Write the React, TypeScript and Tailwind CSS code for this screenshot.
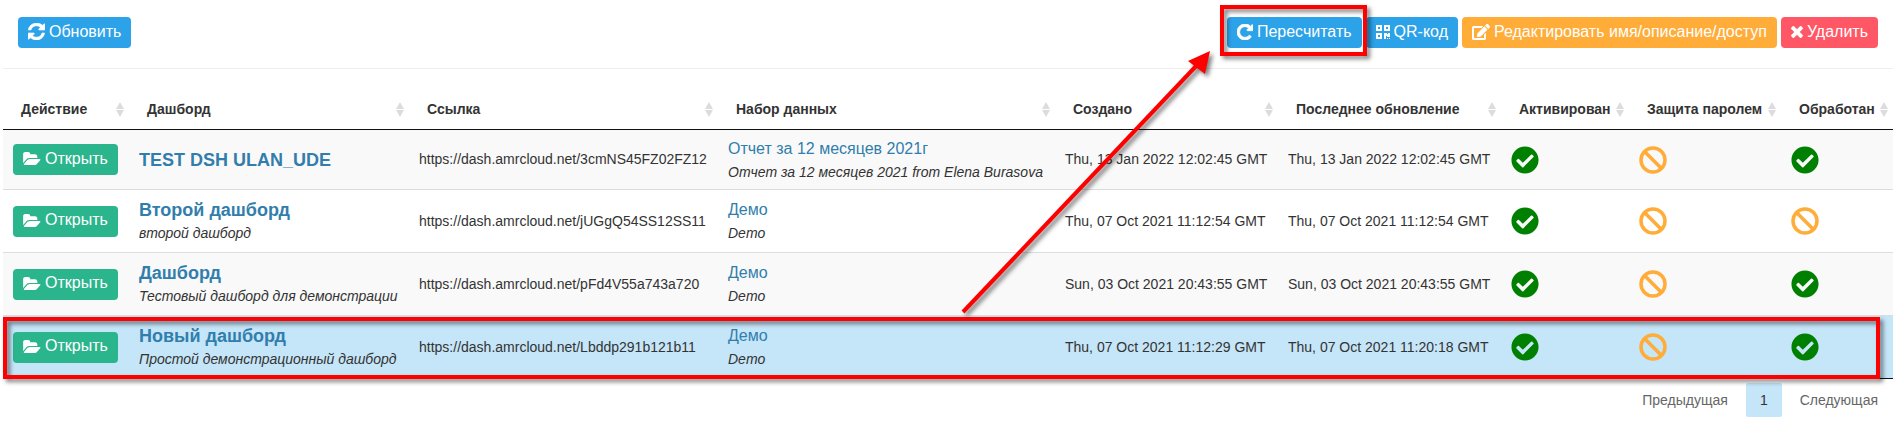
import React from "react";
import { FaEdit, FaCheckCircle } from "react-icons/fa";

type Row = {
  title: string;
  note?: string;
  url: string;
  dataset: string;
  datasetNote: string;
  created: string;
  updated: string;
  active: boolean;
  locked: boolean;
  processed: boolean;
  selected?: boolean;
};

const rows: Row[] = [
  { title: "TEST DSH ULAN_UDE", url: "https://dash.amrcloud.net/3cmNS45FZ02FZ12", dataset: "Отчет за 12 месяцев 2021г", datasetNote: "Отчет за 12 месяцев 2021 from Elena Burasova", created: "Thu, 13 Jan 2022 12:02:45 GMT", updated: "Thu, 13 Jan 2022 12:02:45 GMT", active: true, locked: false, processed: true },
  { title: "Второй дашборд", note: "второй дашборд", url: "https://dash.amrcloud.net/jUGgQ54SS12SS11", dataset: "Демо", datasetNote: "Demo", created: "Thu, 07 Oct 2021 11:12:54 GMT", updated: "Thu, 07 Oct 2021 11:12:54 GMT", active: true, locked: false, processed: false },
  { title: "Дашборд", note: "Тестовый дашборд для демонстрации", url: "https://dash.amrcloud.net/pFd4V55a743a720", dataset: "Демо", datasetNote: "Demo", created: "Sun, 03 Oct 2021 20:43:55 GMT", updated: "Sun, 03 Oct 2021 20:43:55 GMT", active: true, locked: false, processed: true },
  { title: "Новый дашборд", note: "Простой демонстрационный дашборд", url: "https://dash.amrcloud.net/Lbddp291b121b11", dataset: "Демо", datasetNote: "Demo", created: "Thu, 07 Oct 2021 11:12:29 GMT", updated: "Thu, 07 Oct 2021 11:20:18 GMT", active: true, locked: false, processed: true, selected: true },
];

const columns = [
  { label: "Действие", width: "w-[126px]" },
  { label: "Дашборд", width: "w-[280px]" },
  { label: "Ссылка", width: "w-[309px]" },
  { label: "Набор данных", width: "w-[337px]" },
  { label: "Создано", width: "w-[223px]" },
  { label: "Последнее обновление", width: "w-[223px]" },
  { label: "Активирован", width: "w-[128px]" },
  { label: "Защита паролем", width: "w-[152px]" },
  { label: "Обработан", width: "w-[112px]" },
];

const buttonBase = "inline-flex h-[31px] items-center gap-1 whitespace-nowrap rounded px-[10px] pb-[2px] text-base leading-6 text-white";

function RefreshIcon() {
  return (
    <svg viewBox="128 128 1536 1536" className="size-[17px]" fill="currentColor" stroke="currentColor" strokeWidth="50" aria-hidden="true">
      <path d="M1639 1056q0 5-1 7-64 268-268 434.500T892 1664q-146 0-282.500-55T366 1452l-129 129q-19 19-45 19t-45-19-19-45v-448q0-26 19-45t45-19h448q26 0 45 19t19 45-19 45l-137 137q71 66 161 102t187 36q134 0 250-65t186-179q11-17 53-117 8-23 30-23h192q13 0 22.500 9.500t9.500 22.500zm25-800v448q0 26-19 45t-45 19h-448q-26 0-45-19t-19-45 19-45l138-138q-148-137-349-137-134 0-250 65T460 628q-11 17-53 117-8 23-30 23H178q-13 0-22.500-9.500T146 736v-7q65-268 270-434.500T896 128q146 0 284 55.500T1425 340l130-129q19-19 45-19t45 19 19 45z" />
    </svg>
  );
}

function RotateIcon() {
  return (
    <svg viewBox="0 0 1536 1536" className="size-4" fill="currentColor" stroke="currentColor" strokeWidth="80" aria-hidden="true">
      <path d="M1536 128v448q0 26-19 45t-45 19h-448q-42 0-59-40-17-39 14-69l138-138Q969 256 768 256q-104 0-198.500 40.500T406 406 296.500 569.500 256 768t40.500 198.500T406 1130t163.500 109.500T768 1280q119 0 225-52t179-147q7-10 23-12 15 0 25 9l137 138q9 8 9.500 20.500t-7.500 22.500q-109 132-264 204.500T768 1536q-156 0-298-61t-245-164-164-245T0 768t61-298 164-245T470 61 768 0q147 0 284.500 55.500T1297 212l130-129q29-31 70-14 39 17 39 59z" />
    </svg>
  );
}

function QrIcon() {
  return (
    <svg viewBox="0 0 14 14" className="size-[14px]" fill="currentColor" aria-hidden="true">
      <path fillRule="evenodd" d="M0 0h6v6H0zM2 2v2h2V2zM8 0h6v6H8zM10 2v2h2V2zM0 8h6v6H0zM2 10v2h2v-2zM8 8h3v1h1V8h2v4h-3v-1h-1v3H8zM11 13h1v1h-1zM13 13h1v1h-1z" />
    </svg>
  );
}

function FolderIcon() {
  return (
    <svg viewBox="-64 128 1920 1408" className="h-[13px] w-[18px]" fill="currentColor" aria-hidden="true">
      <path d="M1815 952q0 31-31 66l-336 396q-43 51-120.500 86.500T1184 1536H96q-34 0-60.500-13T9 1480q0-31 31-66l336-396q43-51 120.500-86.500T640 896h1088q34 0 60.500 13t26.500 43zm-343-344v160H640q-94 0-197 47.500T279 935l-337 396-5 6q0-4-.5-12.500T-64 1312V352q0-92 66-158t158-66h320q92 0 158 66t66 158v32h544q92 0 158 66t66 158z" />
    </svg>
  );
}

function CrossIcon() {
  return (
    <svg viewBox="302 366 1188 1188" className="size-3" fill="currentColor" aria-hidden="true">
      <path d="M1490 1322q0 40-28 68l-136 136q-28 28-68 28t-68-28l-294-294-294 294q-28 28-68 28t-68-28l-136-136q-28-28-28-68t28-68l294-294-294-294q-28-28-28-68t28-68l136-136q28-28 68-28t68 28l294 294 294-294q28-28 68-28t68 28l136 136q28 28 28 68t-28 68l-294 294 294 294q28 28 28 68z" />
    </svg>
  );
}

function SortIcon() {
  return (
    <svg viewBox="0 0 8 15" className="h-[15px] w-2 shrink-0" fill="#dcdcdc" aria-hidden="true">
      <path d="M4 0L8 7H0zM0 8h8l-4 7z" />
    </svg>
  );
}

function Status({ on }: { on: boolean }) {
  return on ? (
    <FaCheckCircle className="size-7 text-[#008000]" role="img" aria-label="Да" />
  ) : (
    <svg viewBox="0 0 28 28" className="size-7" fill="none" stroke="#ffac38" strokeWidth="3.500" role="img" aria-label="Нет">
      <circle cx="14" cy="14" r="12" />
      <path d="M5.500 5.500l17 17" />
    </svg>
  );
}

export default function App() {
  return (
    <main className="relative bg-white pl-[3px] pr-[11px] font-['Liberation_Sans',Arial,sans-serif] text-sm leading-[21px] text-[#333]">
      <header className="flex h-[69px] items-start justify-between border-b border-[#eee] pl-[15px] pr-[15px] pt-[17px]">
        <button className={`${buttonBase} bg-[#2ca2e8]`}>
          <RefreshIcon /> Обновить
        </button>
        <div className="flex gap-1">
          <div className="relative flex">
            <button className={`${buttonBase} bg-[#2ca2e8]`}>
              <RotateIcon /> Пересчитать
            </button>
            <div className="pointer-events-none absolute -bottom-2 -left-[7px] -right-[5px] -top-3 z-10 border-4 border-[#f00] drop-shadow-[3px_3px_2px_rgba(0,0,0,0.5)]" />
          </div>
          <button className={`${buttonBase} bg-[#2ca2e8]`}>
            <QrIcon /> QR-код
          </button>
          <button className={`${buttonBase} bg-[#ffac38]`}>
            <FaEdit className="h-4 w-[18px]" aria-hidden="true" /> Редактировать имя/описание/доступ
          </button>
          <button className={`${buttonBase} bg-[#ff5765]`}>
            <CrossIcon /> Удалить
          </button>
        </div>
      </header>

      <div className="relative pt-5">
        <table className="w-full table-fixed border-separate border-spacing-0 border-b border-[#111]">
          <colgroup>
            {columns.map((c) => (
              <col key={c.label} className={c.width} />
            ))}
          </colgroup>
          <thead>
            <tr>
              {columns.map((c) => (
                <th key={c.label} scope="col" className="h-[41px] whitespace-nowrap border-b border-[#111] pl-[18px] pr-[5px] text-left font-bold">
                  <div className="flex items-center justify-between">
                    {c.label}
                    <SortIcon />
                  </div>
                </th>
              ))}
            </tr>
          </thead>
          <tbody>
            {rows.map((r, i) => {
              const edge = i === 0 ? "" : "border-t border-[#ddd]";
              const cell = `${edge} whitespace-nowrap px-[10px]`;
              const tone = r.selected ? "bg-[#c5e5f8]" : i % 2 === 0 ? "bg-[#f9f9f9]" : "bg-white";
              return (
                <tr key={r.title} className={`${i === 0 ? "h-[59px]" : "h-[63px]"} ${tone}`}>
                  <td className={cell}>
                    <button className={`${buttonBase} bg-[#2ab58c]`}>
                      <FolderIcon /> Открыть
                    </button>
                  </td>
                  <td className={cell}>
                    <a href={r.url} className="block text-lg font-bold leading-6 text-[#317eac]">{r.title}</a>
                    {r.note && <em className="block leading-[22px]">{r.note}</em>}
                  </td>
                  <td className={cell}>{r.url}</td>
                  <td className={cell}>
                    <a href={r.url} className="block text-base leading-6 text-[#317eac]">{r.dataset}</a>
                    <em className="block leading-[22px]">{r.datasetNote}</em>
                  </td>
                  <td className={cell}>{r.created}</td>
                  <td className={cell}>{r.updated}</td>
                  <td className={cell}><Status on={r.active} /></td>
                  <td className={cell}><Status on={r.locked} /></td>
                  <td className={cell}><Status on={r.processed} /></td>
                </tr>
              );
            })}
          </tbody>
        </table>
        <div className="pointer-events-none absolute bottom-0 left-0 right-[13px] h-[62px] border-4 border-[#f00] drop-shadow-[3px_3px_2px_rgba(0,0,0,0.5)]" />
      </div>

      <nav className="mt-1 flex justify-end gap-1 pr-px text-[#666]" aria-label="Страницы">
        <button className="h-[34px] px-[14px]">Предыдущая</button>
        <button className="h-[34px] rounded-xs bg-[#c5e5f8] px-[14px] text-[#333]" aria-current="page">1</button>
        <button className="h-[34px] px-[14px]">Следующая</button>
      </nav>

      <svg viewBox="0 0 270 280" className="pointer-events-none absolute right-[674px] top-[45px] h-[280px] w-[270px] drop-shadow-[3px_3px_2px_rgba(0,0,0,0.5)]" aria-hidden="true">
        <path d="M3 267L238 19" stroke="#f00" strokeWidth="4" />
        <path d="M250 6L245 29L228 16Z" fill="#f00" />
      </svg>
    </main>
  );
}
